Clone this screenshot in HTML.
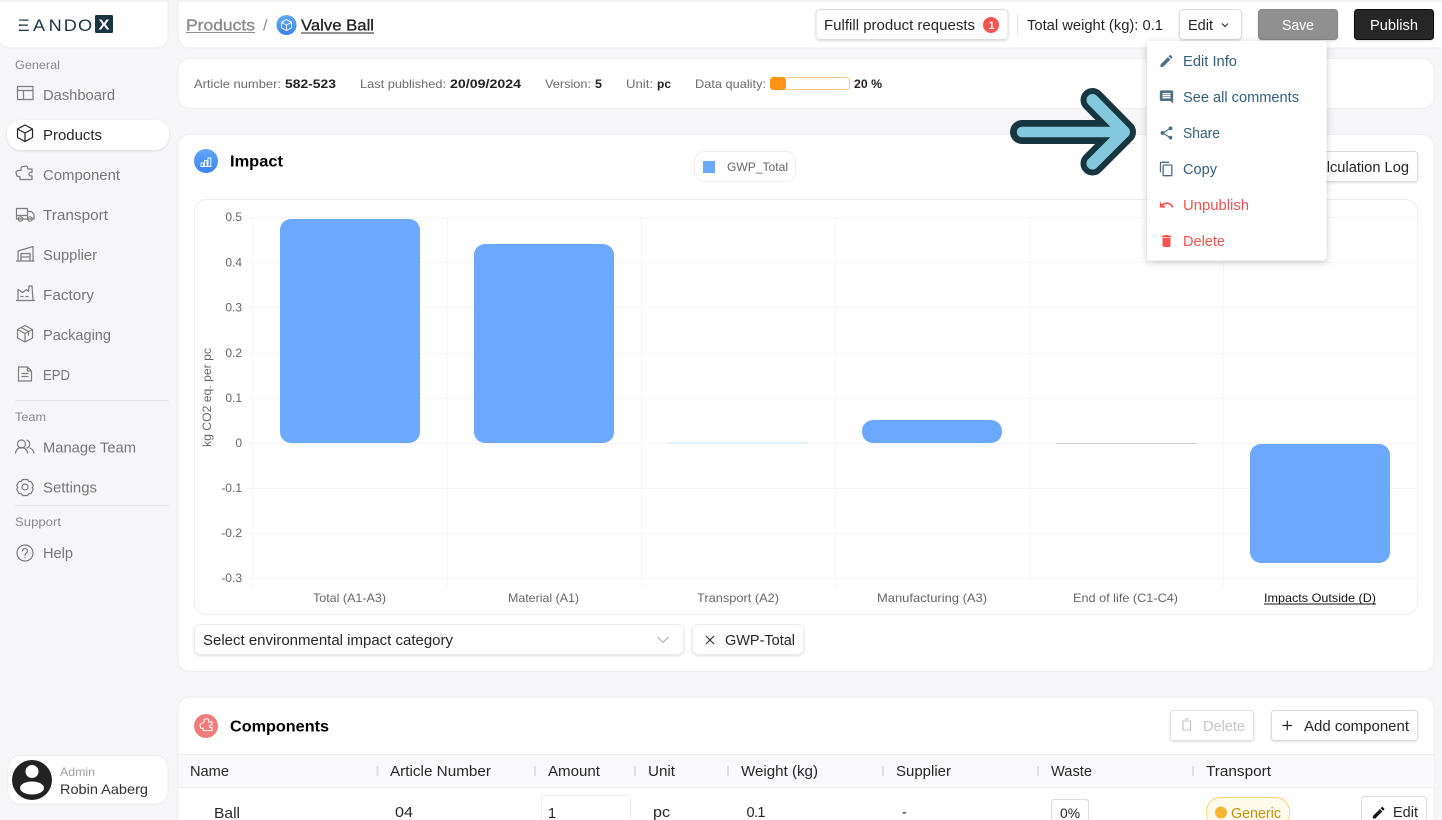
<!DOCTYPE html>
<html lang="en"><head><meta charset="utf-8"><title>Valve Ball</title>
<style>
html,body{margin:0;padding:0;width:1442px;height:820px;overflow:hidden;background:#f6f6f8}
svg{display:block;font-family:"Liberation Sans",Arial,sans-serif}
text{white-space:pre}
.n{font-size:14.5px;fill:#767676}
.d{font-size:14.5px;fill:#262626}
.s{font-size:12px;fill:#6b6b6b}
.sb{font-size:12px;fill:#222;font-weight:700}
.h{font-size:16px;fill:#000;font-weight:700}
.g{font-size:12px;fill:#888}
.ax{font-size:12px;fill:#666}
.mi{font-size:14.5px;fill:#33607a}
.mr{font-size:14.5px;fill:#f9534f}
.i{fill:none;stroke:#7c7c7c;stroke-width:1.2;stroke-linejoin:round;stroke-linecap:round}
</style></head><body>
<svg width="1442" height="820" viewBox="0 0 1442 820" xmlns="http://www.w3.org/2000/svg">
<defs>
<filter id="b" x="-10%" y="-20%" width="120%" height="150%"><feDropShadow dx="0" dy="1" stdDeviation="1" flood-color="#000" flood-opacity=".13"/></filter>
<filter id="m" x="-20%" y="-20%" width="140%" height="140%"><feDropShadow dx="0" dy="2" stdDeviation="4" flood-color="#000" flood-opacity=".2"/></filter>
<linearGradient id="bl" x1="0" y1="0" x2="0" y2="1"><stop offset="0" stop-color="#64a8f7"/><stop offset="1" stop-color="#3b82f6"/></linearGradient>
</defs>
<rect width="1442" height="820" fill="#f6f6f8"/>

<!-- logo card -->
<path d="M-2 1H168V36a12 12 0 0 1-12 12H10a12 12 0 0 1-12-12Z" fill="#fff" stroke="#eeeeee"/>
<text transform="translate(17.500,31) scale(1.1,1)" x="0 14.100 28.300 42 55" y="0" font-size="16.5" fill="#1a3540">EANDO</text>
<rect x="18" y="20.600" width="4.500" height="3.700" fill="#fff"/>
<rect x="18" y="26" width="4.500" height="3.500" fill="#fff"/>
<rect x="95" y="15" width="18" height="18" rx="1.5" fill="#1a3540"/>
<text x="98.5" y="29.5" font-size="15" font-weight="700" fill="#fff" textLength="11" lengthAdjust="spacingAndGlyphs">X</text>

<!-- sidebar -->
<text class="g" x="15" y="69" textLength="45" lengthAdjust="spacingAndGlyphs">General</text>
<rect x="7" y="120" width="162" height="30" rx="14" fill="#fff" filter="url(#b)"/>
<text class="n" x="43" y="100" textLength="72" lengthAdjust="spacingAndGlyphs">Dashboard</text>
<text class="d" x="43" y="140" textLength="59" lengthAdjust="spacingAndGlyphs">Products</text>
<text class="n" x="43" y="180" textLength="77" lengthAdjust="spacingAndGlyphs">Component</text>
<text class="n" x="43" y="220" textLength="65" lengthAdjust="spacingAndGlyphs">Transport</text>
<text class="n" x="43" y="260" textLength="54" lengthAdjust="spacingAndGlyphs">Supplier</text>
<text class="n" x="43" y="300" textLength="51" lengthAdjust="spacingAndGlyphs">Factory</text>
<text class="n" x="43" y="340" textLength="68" lengthAdjust="spacingAndGlyphs">Packaging</text>
<text class="n" x="43" y="380" textLength="27" lengthAdjust="spacingAndGlyphs">EPD</text>
<rect x="15" y="400" width="154" height="1" fill="#e6e6e8"/>
<text class="g" x="15" y="421" textLength="31" lengthAdjust="spacingAndGlyphs">Team</text>
<text class="n" x="43" y="452.700" textLength="93" lengthAdjust="spacingAndGlyphs">Manage Team</text>
<text class="n" x="43" y="492.700" textLength="54" lengthAdjust="spacingAndGlyphs">Settings</text>
<rect x="15" y="505" width="154" height="1" fill="#e6e6e8"/>
<text class="g" x="15" y="526" textLength="46" lengthAdjust="spacingAndGlyphs">Support</text>
<text class="n" x="43" y="558" textLength="30" lengthAdjust="spacingAndGlyphs">Help</text>

<!-- sidebar icons -->
<g class="i">
<path d="M17.5 86.5h15.5v13h-15.5zM17.5 90.5h15.5M23.5 90.5v9"/>
<path style="stroke:#222" d="M25 125l7.5 4v8.5l-7.5 4-7.5-4V129zM17.5 129l7.5 4 7.5-4M25 133v8.5"/>
<path d="M21 170.5v-1.5a2 2 0 0 1 2-2.5h1.5a2 2 0 0 1 3 0.2l.3 2.3h4.2v3.5h-1.5a1.7 1.7 0 0 0 0 3.4h1.500v3.600h-12v-3h-1.500a2 2 0 0 1-2-1.800l-.5-2a2 2 0 0 1 2-2.200z"/>
<path d="M16.5 208.5h11v10.5h-11zM27.5 211.5h4l2.500 3v4.500h-6.500M16.5 215.500h11"/>
<circle cx="20.5" cy="219" r="2.200"/><circle cx="30" cy="219" r="2.200"/>
<path d="M16.5 261h17.500M18 261v-10l15-4.500V261M21 261v-7.500h9V261M21 257h9"/>
<path d="M16.5 300.500h18M18 300.500v-11l4.500 3 4-3 2 2 .5-5.500h3l1 14.500M21 296.500h2M26 296.500h2"/>
<path d="M25 325.500l7.500 4v8.500l-7.500 4-7.500-4v-8.500zM17.500 329.500l7.500 4 7.500-4M25 333.500v8.500M21 327.500l7.500 4v3.500"/>
<path d="M18.500 367h9l4 4v10h-13zM27.500 367v4h4M22 373.500h6M22 376.500h6"/>
<circle cx="21.500" cy="444" r="4"/><path d="M15.500 453c.5-3.500 3-5.500 6-5.500s5.500 2 6 5.500M27 440.200a4 4 0 0 1 0 7.600M30 448c2 .8 3.500 2.700 4 5"/>
<circle cx="25" cy="487" r="3"/><path d="M22.500 479.500h5l1.200 1.800 2.300.2 2.300 4-1 2 .9 2-2.200 4-2.300.2-1.200 1.800h-5l-1.200-1.800-2.300-.2-2.300-4 1-2-1-2 2.300-4 2.300-.2z"/>
<circle cx="25" cy="553" r="8"/><path d="M22.500 551a2.500 2.500 0 1 1 3.800 2.100c-.9.600-1.300 1-1.300 2.100"/><path d="M25 557.700v.1"/>
</g>

<!-- user card -->
<rect x="8" y="755.500" width="160" height="48.500" rx="12" fill="#fff" stroke="#ececee"/>
<circle cx="32" cy="780" r="20" fill="#222"/>
<circle cx="32" cy="771.500" r="6.500" fill="#fff"/>
<ellipse cx="32" cy="788" rx="12" ry="6.500" fill="#fff"/>
<text x="60" y="776" font-size="12" fill="#a0a0a0" textLength="35" lengthAdjust="spacingAndGlyphs">Admin</text>
<text x="60" y="794" font-size="14" fill="#333" textLength="88" lengthAdjust="spacingAndGlyphs">Robin Aaberg</text>

<!-- header -->
<path d="M178 1H1444V48H190a12 12 0 0 1-12-12Z" fill="#fff" stroke="#eeeeee"/>
<text x="186" y="30.500" font-size="16" fill="#8d8d8d" stroke="#8d8d8d" stroke-width=".4" textLength="69" lengthAdjust="spacingAndGlyphs">Products</text>
<rect x="186" y="32" width="69" height="1" fill="#8d8d8d"/>
<text x="263" y="30.500" font-size="16" fill="#8d8d8d">/</text>
<circle cx="286.500" cy="25" r="10" fill="url(#bl)"/>
<path d="M286.500 19.500l5 2.800v5.500l-5 2.800-5-2.800v-5.500zM281.500 22.300l5 2.800 5-2.800M286.500 25.100v5.500" fill="none" stroke="#fff" stroke-width=".9"/>
<text x="301" y="30.500" font-size="16" fill="#222" stroke="#222" stroke-width=".3" textLength="73" lengthAdjust="spacingAndGlyphs">Valve Ball</text>
<rect x="301" y="32.500" width="73" height="1" fill="#222"/>

<rect x="816" y="9.500" width="192" height="30" rx="4" fill="#fff" stroke="#dcdcdc" filter="url(#b)"/>
<text class="d" x="824" y="30" textLength="151" lengthAdjust="spacingAndGlyphs">Fulfill product requests</text>
<circle cx="991" cy="25" r="8" fill="#f9534f"/>
<text x="988.500" y="29" font-size="11" font-weight="700" fill="#fff">1</text>
<rect x="1017" y="14" width="1" height="21" fill="#e6e6e6"/>
<text class="d" x="1027" y="30" textLength="136" lengthAdjust="spacingAndGlyphs">Total weight (kg): 0.1</text>
<rect x="1179.500" y="9.500" width="62" height="30" rx="4" fill="#fff" stroke="#dcdcdc" filter="url(#b)"/>
<text class="d" x="1188" y="30" textLength="25" lengthAdjust="spacingAndGlyphs">Edit</text>
<path d="M1222 23.500l3 3 3-3" fill="none" stroke="#333" stroke-width="1.200"/>
<rect x="1258.500" y="9.500" width="79" height="30" rx="3" fill="#909090" stroke="#858585" filter="url(#b)"/>
<text x="1282" y="30" font-size="14.500" fill="#fff" textLength="32" lengthAdjust="spacingAndGlyphs">Save</text>
<rect x="1354.500" y="9.500" width="79" height="30" rx="3" fill="#262626" stroke="#111" filter="url(#b)"/>
<text x="1370" y="30" font-size="14.500" fill="#fff" textLength="48" lengthAdjust="spacingAndGlyphs">Publish</text>

<!-- info card -->
<rect x="178" y="58.500" width="1256" height="50" rx="12" fill="#fff" stroke="#eeeeee"/>
<text class="s" x="194" y="88" textLength="87" lengthAdjust="spacingAndGlyphs">Article number:</text>
<text class="sb" x="285" y="88" textLength="51" lengthAdjust="spacingAndGlyphs">582-523</text>
<text class="s" x="360" y="88" textLength="86" lengthAdjust="spacingAndGlyphs">Last published:</text>
<text class="sb" x="450" y="88" textLength="71" lengthAdjust="spacingAndGlyphs">20/09/2024</text>
<text class="s" x="545" y="88" textLength="46" lengthAdjust="spacingAndGlyphs">Version:</text>
<text class="sb" x="595" y="88" textLength="7" lengthAdjust="spacingAndGlyphs">5</text>
<text class="s" x="626" y="88" textLength="27" lengthAdjust="spacingAndGlyphs">Unit:</text>
<text class="sb" x="657" y="88" textLength="14" lengthAdjust="spacingAndGlyphs">pc</text>
<text class="s" x="695" y="88" textLength="71" lengthAdjust="spacingAndGlyphs">Data quality:</text>
<rect x="770.500" y="77.500" width="79" height="12" rx="3" fill="#fff" stroke="#fbc98a"/>
<rect x="770" y="77" width="16" height="13" rx="3.500" fill="#ff9416"/>
<text class="sb" x="854" y="88" textLength="28" lengthAdjust="spacingAndGlyphs">20 %</text>

<!-- impact card -->
<rect x="178" y="134.500" width="1256" height="537" rx="12" fill="#fff" stroke="#eeeeee"/>
<circle cx="206" cy="161" r="12" fill="url(#bl)"/>
<path d="M200.500 166.500h11M201 166v-3h2.500v3M204.500 166v-5.500h2.500v5.500M208 166v-8h2.800v8" fill="none" stroke="#fff" stroke-width=".9"/>
<text class="h" x="230" y="166.500" textLength="53" lengthAdjust="spacingAndGlyphs">Impact</text>
<rect x="694.500" y="151.500" width="101" height="30" rx="10" fill="#fff" stroke="#eeeeee"/>
<rect x="703" y="161" width="12" height="12" fill="#6ca9fd"/>
<text x="727" y="171" font-size="12" fill="#666" textLength="61" lengthAdjust="spacingAndGlyphs">GWP_Total</text>
<rect x="1270.500" y="151.500" width="147" height="30" rx="3" fill="#fff" stroke="#dcdcdc" filter="url(#b)"/>
<text class="d" x="1308" y="172" textLength="101" lengthAdjust="spacingAndGlyphs">Calculation Log</text>

<!-- chart -->
<rect x="194.500" y="199.500" width="1223" height="415" rx="12" fill="#fff" stroke="#eeeeee"/>
<g stroke="#f6f6f6" fill="none">
<path d="M247 217.500H1417M247 262.500H1417M247 307.500H1417M247 353.500H1417M247 398.500H1417M247 443.500H1417M247 488.500H1417M247 533.500H1417M247 578.500H1417"/>
<path d="M252.500 217V587M447.500 217V587M641.500 217V587M835.500 217V587M1029.500 217V587M1223.500 217V587M1417.500 217V587"/>
</g>
<rect x="280" y="219" width="140" height="224" rx="11" fill="#6ca9fd"/>
<rect x="474" y="244" width="140" height="199" rx="11" fill="#6ca9fd"/>
<rect x="668" y="442.500" width="140" height="1" fill="#cfe2fd"/>
<rect x="862" y="420" width="140" height="23" rx="11" fill="#6ca9fd"/>
<rect x="1056" y="443" width="140" height="1" fill="#c4c8d0"/>
<rect x="1250" y="444" width="140" height="119" rx="11" fill="#6ca9fd"/>
<g class="ax" text-anchor="end">
<text x="242" y="221">0.5</text><text x="242" y="266.500">0.4</text><text x="242" y="311.500">0.3</text><text x="242" y="357">0.2</text><text x="242" y="402">0.1</text><text x="242" y="447">0</text><text x="242" y="492">-0.1</text><text x="242" y="537">-0.2</text><text x="242" y="582">-0.3</text>
</g>
<text class="ax" transform="translate(211,447) rotate(-90)" x="0" y="0" textLength="99" lengthAdjust="spacingAndGlyphs">kg CO2 eq. per pc</text>
<text class="ax" x="313" y="602" textLength="73" lengthAdjust="spacingAndGlyphs">Total (A1-A3)</text>
<text class="ax" x="508" y="602" textLength="71" lengthAdjust="spacingAndGlyphs">Material (A1)</text>
<text class="ax" x="697" y="602" textLength="82" lengthAdjust="spacingAndGlyphs">Transport (A2)</text>
<text class="ax" x="877" y="602" textLength="110" lengthAdjust="spacingAndGlyphs">Manufacturing (A3)</text>
<text class="ax" x="1073" y="602" textLength="105" lengthAdjust="spacingAndGlyphs">End of life (C1-C4)</text>
<text x="1264" y="602" font-size="12" fill="#111" textLength="112" lengthAdjust="spacingAndGlyphs">Impacts Outside (D)</text>
<rect x="1264" y="603.500" width="112" height="1" fill="#111"/>

<!-- select -->
<rect x="194.500" y="624.500" width="489" height="30" rx="6" fill="#fff" stroke="#ececec" filter="url(#b)"/>
<text class="d" x="203" y="645" textLength="250" lengthAdjust="spacingAndGlyphs">Select environmental impact category</text>
<path d="M657.500 637l5.500 5.500 5.500-5.500" fill="none" stroke="#bdbdbd" stroke-width="1.300"/>
<rect x="692.500" y="624.500" width="111" height="30" rx="6" fill="#fff" stroke="#ececec" filter="url(#b)"/>
<path d="M706 636l8 8M714 636l-8 8" stroke="#333" stroke-width="1.200"/>
<text class="d" x="725" y="645" textLength="70" lengthAdjust="spacingAndGlyphs">GWP-Total</text>

<!-- components -->
<path d="M178 830V709a12 12 0 0 1 12-12H1422a12 12 0 0 1 12 12V830Z" fill="#fff" stroke="#eeeeee"/>
<circle cx="206" cy="726" r="12" fill="#f07c7c"/>
<path d="M204 722v-1.500a1.500 1.500 0 0 1 1.500-1.500h1a1.500 1.500 0 0 1 2 .5l.2 2.500h3.300v3h-1.200a1.300 1.300 0 0 0 0 2.600h1.200v3h-8.800v-2.200h-1.200a1.600 1.600 0 0 1-1.600-1.400l-.4-1.800a1.600 1.600 0 0 1 1.500-1.700z" fill="none" stroke="#fff"/>
<text class="h" x="230" y="731.500" textLength="99" lengthAdjust="spacingAndGlyphs">Components</text>
<rect x="1170.500" y="710.500" width="83" height="30" rx="3" fill="#fff" stroke="#e4e4e4" filter="url(#b)"/>
<path d="M1183 721h7.500v9h-7.500zM1182 721h9.500M1184.500 719h4.500" fill="none" stroke="#c4c4c4" stroke-width="1.100"/>
<text x="1203" y="731" font-size="14.500" fill="#c8c8c8" textLength="42" lengthAdjust="spacingAndGlyphs">Delete</text>
<rect x="1271.500" y="710.500" width="146" height="30" rx="3" fill="#fff" stroke="#dcdcdc" filter="url(#b)"/>
<path d="M1282.500 725.500h9.500M1287.250 720.750v9.500" stroke="#222" stroke-width="1.200"/>
<text class="d" x="1304" y="731" textLength="105" lengthAdjust="spacingAndGlyphs">Add component</text>

<rect x="179" y="754" width="1255" height="33.500" fill="#f9f9fb"/>
<path d="M179 754.500H1434M179 787.500H1434" stroke="#eeeef1" fill="none"/>
<g fill="#dde0ea">
<rect x="376.500" y="766" width="2" height="10"/><rect x="534" y="766" width="2" height="10"/><rect x="634" y="766" width="2" height="10"/><rect x="727" y="766" width="2" height="10"/><rect x="882" y="766" width="2" height="10"/><rect x="1037" y="766" width="2" height="10"/><rect x="1192" y="766" width="2" height="10"/>
</g>
<text class="d" x="190" y="776" textLength="39" lengthAdjust="spacingAndGlyphs">Name</text>
<text class="d" x="390" y="776" textLength="101" lengthAdjust="spacingAndGlyphs">Article Number</text>
<text class="d" x="548" y="776" textLength="52" lengthAdjust="spacingAndGlyphs">Amount</text>
<text class="d" x="648" y="776" textLength="27" lengthAdjust="spacingAndGlyphs">Unit</text>
<text class="d" x="741" y="776" textLength="77" lengthAdjust="spacingAndGlyphs">Weight (kg)</text>
<text class="d" x="896" y="776" textLength="55" lengthAdjust="spacingAndGlyphs">Supplier</text>
<text class="d" x="1051" y="776" textLength="41" lengthAdjust="spacingAndGlyphs">Waste</text>
<text class="d" x="1206" y="776" textLength="65" lengthAdjust="spacingAndGlyphs">Transport</text>

<text class="d" x="214" y="818" textLength="26" lengthAdjust="spacingAndGlyphs">Ball</text>
<text class="d" x="395" y="817" textLength="18" lengthAdjust="spacingAndGlyphs">04</text>
<rect x="541.500" y="795.500" width="89" height="40" rx="3" fill="#fff" stroke="#ececec"/>
<text class="d" x="548" y="818">1</text>
<text class="d" x="653" y="817" textLength="17" lengthAdjust="spacingAndGlyphs">pc</text>
<text class="d" x="746.500" y="817" textLength="19" lengthAdjust="spacing">0.1</text>
<text class="d" x="902" y="817">-</text>
<rect x="1051.500" y="799.500" width="37" height="30" rx="3" fill="#fff" stroke="#dcdcdc"/>
<text x="1060" y="818" font-size="14" fill="#222" textLength="20" lengthAdjust="spacingAndGlyphs">0%</text>
<rect x="1206.500" y="797.500" width="83" height="30" rx="14" fill="#fffbec" stroke="#fbd77c"/>
<circle cx="1221" cy="812.500" r="6" fill="#f5b731"/>
<text x="1231" y="818" font-size="14.500" fill="#c68d0e" textLength="50" lengthAdjust="spacingAndGlyphs">Generic</text>
<rect x="1361.500" y="796.500" width="65" height="36" rx="3" fill="#fff" stroke="#dcdcdc"/>
<path transform="translate(1371,805) scale(.64)" fill="#111" d="M3 17.250V21h3.750L17.810 9.940l-3.750-3.750L3 17.250zM20.710 7.040c.39-.39.39-1.020 0-1.410l-2.340-2.340c-.39-.39-1.020-.39-1.410 0l-1.830 1.830 3.750 3.750 1.830-1.830z"/>
<text class="d" x="1393" y="817" textLength="25" lengthAdjust="spacingAndGlyphs">Edit</text>

<!-- dropdown -->
<rect x="1147" y="41" width="179.500" height="219.500" rx="4" fill="#fff" filter="url(#m)"/>
<g fill="#4f7083">
<path transform="translate(1158.500,53) scale(.667)" d="M3 17.250V21h3.750L17.810 9.940l-3.750-3.750L3 17.250zM20.710 7.040c.39-.39.39-1.020 0-1.410l-2.340-2.340c-.39-.39-1.020-.39-1.410 0l-1.830 1.830 3.750 3.750 1.830-1.830z"/>
<path transform="translate(1158.500,89) scale(.667)" d="M21.990 4c0-1.100-.89-2-1.990-2H4c-1.100 0-2 .9-2 2v12c0 1.100.9 2 2 2h14l4 4-.01-18zM18 14H6v-2h12v2zm0-3H6V9h12v2zm0-3H6V6h12v2z"/>
<path transform="translate(1158.500,125) scale(.667)" d="M18 16.080c-.76 0-1.440.3-1.960.77L8.910 12.700c.05-.23.09-.46.09-.7s-.04-.47-.09-.7l7.050-4.110c.54.5 1.250.81 2.040.81 1.660 0 3-1.340 3-3s-1.340-3-3-3-3 1.340-3 3c0 .24.04.47.09.7L8.040 9.810C7.500 9.310 6.790 9 6 9c-1.660 0-3 1.340-3 3s1.340 3 3 3c.79 0 1.500-.31 2.040-.81l7.120 4.160c-.05.21-.08.43-.08.65 0 1.610 1.310 2.920 2.920 2.920 1.610 0 2.920-1.310 2.920-2.920s-1.310-2.920-2.920-2.920z"/>
<path transform="translate(1158.500,161) scale(.667)" d="M16 1H4c-1.100 0-2 .9-2 2v14h2V3h12V1zm3 4H8c-1.100 0-2 .9-2 2v14c0 1.100.9 2 2 2h11c1.100 0 2-.9 2-2V7c0-1.100-.9-2-2-2zm0 16H8V7h11v14z"/>
</g>
<g fill="#f9534f">
<path transform="translate(1158.500,197) scale(.667)" d="M12.500 8c-2.650 0-5.050.99-6.900 2.600L2 7v9h9l-3.620-3.620c1.390-1.160 3.160-1.880 5.120-1.880 3.540 0 6.550 2.310 7.600 5.500l2.370-.78C21.080 11.030 17.150 8 12.500 8z"/>
<path transform="translate(1158.500,233) scale(.667)" d="M6 19c0 1.100.9 2 2 2h8c1.100 0 2-.9 2-2V7H6v12zM19 4h-3.500l-1-1h-5l-1 1H5v2h14V4z"/>
</g>
<text class="mi" x="1183" y="66" textLength="54" lengthAdjust="spacingAndGlyphs">Edit Info</text>
<text class="mi" x="1183" y="102" textLength="116" lengthAdjust="spacingAndGlyphs">See all comments</text>
<text class="mi" x="1183" y="138" textLength="37" lengthAdjust="spacingAndGlyphs">Share</text>
<text class="mi" x="1183" y="174" textLength="34" lengthAdjust="spacingAndGlyphs">Copy</text>
<text class="mr" x="1183" y="210" textLength="66" lengthAdjust="spacingAndGlyphs">Unpublish</text>
<text class="mr" x="1183" y="246" textLength="42" lengthAdjust="spacingAndGlyphs">Delete</text>

<!-- arrow -->
<g fill="none" stroke-linecap="round" stroke-linejoin="round">
<path d="M1022 132H1124M1092.500 100L1124 132L1092.500 163.500" stroke="#183640" stroke-width="24"/>
<path d="M1022 132H1124" stroke="#83c8dc" stroke-width="10.500"/>
<path d="M1092.500 100L1124 132L1092.500 163.500" stroke="#83c8dc" stroke-width="12"/>
</g>
</svg>
</body></html>
